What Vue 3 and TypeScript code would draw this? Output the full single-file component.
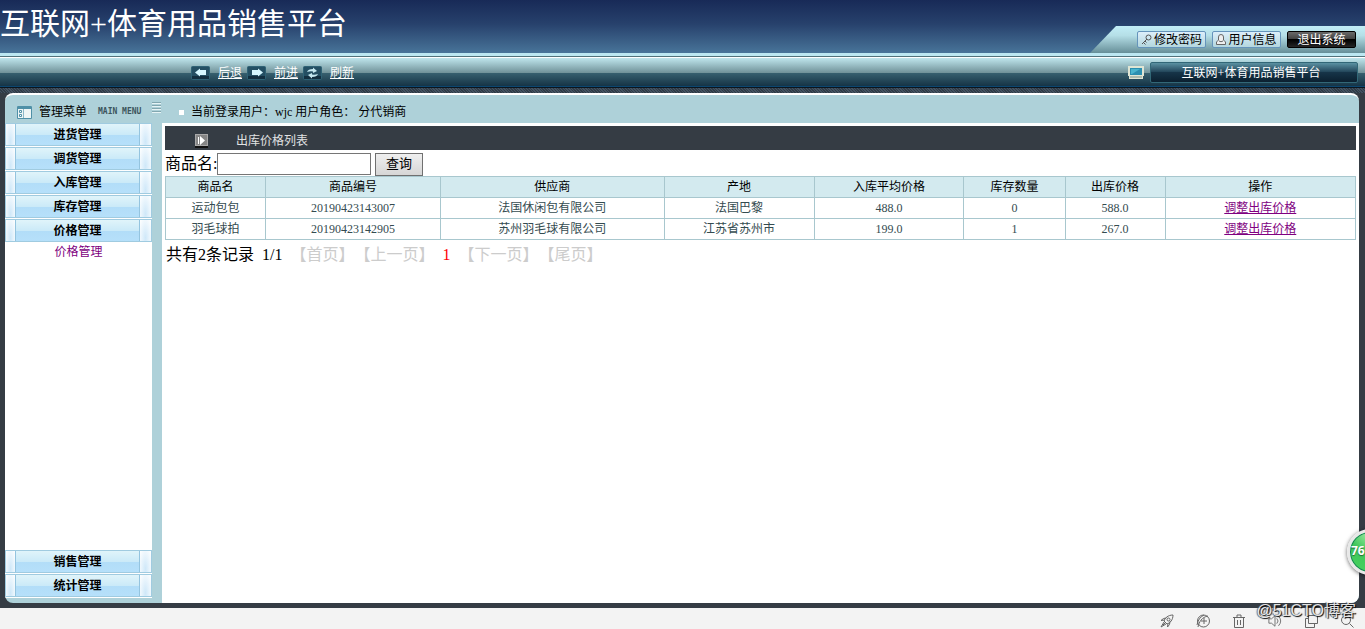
<script setup lang="ts">
import { ref } from 'vue'

interface Product {
  name: string
  code: string
  supplier: string
  origin: string
  average: string
  stock: number
  price: string
}

const keyword = ref('')
const siteName = '互联网+体育用品销售平台'
const upperMenu = ['进货管理', '调货管理', '入库管理', '库存管理', '价格管理']
const lowerMenu = ['销售管理', '统计管理']
const columns = ['商品名', '商品编号', '供应商', '产地', '入库平均价格', '库存数量', '出库价格', '操作']
const products: Product[] = [
  { name: '运动包包', code: '20190423143007', supplier: '法国休闲包有限公司', origin: '法国巴黎', average: '488.0', stock: 0, price: '588.0' },
  { name: '羽毛球拍', code: '20190423142905', supplier: '苏州羽毛球有限公司', origin: '江苏省苏州市', average: '199.0', stock: 1, price: '267.0' },
]
</script>

<template>
  <div class="page">
    <header class="banner">
      <h1>{{ siteName }}</h1>
      <div class="account">
        <button type="button" class="account-btn">
          <svg width="11" height="12" viewBox="0 0 11 12" fill="none" stroke="#555"><circle cx="7.500" cy="3.500" r="2.500" /><path d="M6 5 1 10M2.500 8.500l2 2M4 7l1.500 1.500" /></svg>
          <span>修改密码</span>
        </button>
        <button type="button" class="account-btn">
          <svg width="10" height="12" viewBox="0 0 10 12" fill="#eee" stroke="#666"><path d="M2.500 6V3a2.500 2.500 0 0 1 5 0v3l2 2v2.500h-9V8z" /><path d="M3 7q2 1.500 4 0" /></svg>
          <span>用户信息</span>
        </button>
        <button type="button" class="account-btn dark">退出系统</button>
      </div>
    </header>

    <nav class="toolbar">
      <div class="history">
        <a href="#back">
          <svg width="19" height="14" viewBox="0 0 19 14"><rect x=".5" y=".5" width="18" height="13" rx="1" fill="#244f63" stroke="#2f6275" /><path d="M1 10h17v3H1z" fill="#122f40" /><path d="M4 6.500 9 2.500V4h6v5H9v1.500z" fill="#d5f7ff" /></svg>
          <span>后退</span>
        </a>
        <a href="#forward">
          <svg width="19" height="14" viewBox="0 0 19 14"><rect x=".5" y=".5" width="18" height="13" rx="1" fill="#244f63" stroke="#2f6275" /><path d="M1 10h17v3H1z" fill="#122f40" /><path d="M16 6.500 11 2.500V4H5v5h6v1.500z" fill="#d5f7ff" /></svg>
          <span>前进</span>
        </a>
        <a href="#refresh">
          <svg width="19" height="14" viewBox="0 0 19 14"><rect x=".5" y=".5" width="18" height="13" rx="1" fill="#244f63" stroke="#2f6275" /><path d="M1 10h17v3H1z" fill="#122f40" /><path d="M4 6q1-3 6-3V1.500l4 3.500-4 2V5.500Q7 5 4 6zM15 8q-1 3-6 3v1.500L5 9l4-2v1.500q3 .5 6-.5z" fill="#c5e9f1" /></svg>
          <span>刷新</span>
        </a>
      </div>
      <svg width="16" height="13" viewBox="0 0 16 13"><path d="M0 0h16v10h-1v3H1v-3H0z" fill="#dfe5d4" /><path d="M2 2h12v7H2z" fill="#2b8fb0" /><path d="M3 3h9L4 8H3z" fill="#49b4cd" /><path d="M2 11h12" stroke="#7d9289" /></svg>
      <div class="site">{{ siteName }}</div>
    </nav>

    <main class="frame">
      <div class="panel">
        <div class="status">
          <div class="menu-head">
            <svg width="15" height="13" viewBox="0 0 15 13"><path d="M.5.5h14v12H.5z" fill="#eef5f5" stroke="#4f90a7" /><path d="M1 1h13v2H1z" fill="#4f90a7" /><path d="M2.500 4.500h2v2h-2zm0 4h2v2h-2z" fill="#fff" stroke="#4f90a7" /><path d="M6.500 3v9" stroke="#8cb9c8" /></svg>
            <span>管理菜单</span>
            <small>MAIN MENU</small>
            <svg class="grip" width="9" height="12" viewBox="0 0 9 12"><path d="M0 .5h9M0 3.500h9M0 6.500h9M0 9.500h9" stroke="#82a7b0" /><path d="M0 1.500h9M0 4.500h9M0 7.500h9M0 10.500h9" stroke="#e6f3f5" /></svg>
          </div>
          <i class="dot"></i>
          <span>当前登录用户：wjc 用户角色： 分代销商</span>
        </div>
        <div class="columns">
          <aside class="menu">
            <button v-for="item in upperMenu" :key="item" type="button" class="menu-item"><span>{{ item }}</span></button>
            <a href="#prices" class="submenu">价格管理</a>
            <div class="spacer"></div>
            <button v-for="item in lowerMenu" :key="item" type="button" class="menu-item"><span>{{ item }}</span></button>
          </aside>
          <section class="content">
            <h2>
              <svg width="13" height="14" viewBox="0 0 13 14"><path d="M0 0h13v14H0z" fill="#111" /><path d="M0 0h13v12H0z" fill="#a8a8a8" /><path d="M1 1h11v10H1z" fill="#858585" /><path d="M3 3h1v7H3zM5 2l5 4.500L5 11z" fill="#fff" /></svg>
              <span>出库价格列表</span>
            </h2>
            <form class="search" @submit.prevent>
              <label for="keyword">商品名:</label>
              <input id="keyword" v-model="keyword" type="text" />
              <button type="submit">查询</button>
            </form>
            <table>
              <colgroup><col v-for="(column, i) in columns" :key="column" :class="`col-${i}`" /></colgroup>
              <thead>
                <tr><th v-for="column in columns" :key="column">{{ column }}</th></tr>
              </thead>
              <tbody>
                <tr v-for="p in products" :key="p.code">
                  <td>{{ p.name }}</td>
                  <td>{{ p.code }}</td>
                  <td>{{ p.supplier }}</td>
                  <td>{{ p.origin }}</td>
                  <td>{{ p.average }}</td>
                  <td>{{ p.stock }}</td>
                  <td>{{ p.price }}</td>
                  <td><a href="#adjust">调整出库价格</a></td>
                </tr>
              </tbody>
            </table>
            <div class="pager">
              <span>共有2条记录</span>
              <span>1/1</span>
              <span class="off">【首页】【上一页】</span>
              <span class="current">1</span>
              <span class="off">【下一页】【尾页】</span>
            </div>
          </section>
        </div>
      </div>
    </main>

    <footer class="tray">
      <svg viewBox="0 0 14 14"><path d="M4 7c1-3 4-6 9-6 0 5-3 8-6 9zM4.500 6 1 6.500 3.500 4.500 6 4M8 9.500 7.500 13l2-2.500.5-3M4 8l-3 5 5-3M3 11l3-3" /><circle cx="8.500" cy="5.500" r="1.500" /></svg>
      <svg viewBox="0 0 14 14"><circle cx="7.500" cy="7" r="6" /><path d="M2 13C3 8 6 3 12 2M1 11C2 6 4 3 8 1M5 7h6M8 4v6" /></svg>
      <svg viewBox="0 0 14 14"><path d="M1 3.500h12M5 3V1h4v2M2.500 4v9.500h9V4M5.500 6v5M8.500 6v5" /></svg>
      <svg viewBox="0 0 16 14"><path d="M1 4.500h3L8 1v12L4 9.500H1zM10 4q3 3 0 6M12 1.500q5 5.500 0 11" /></svg>
      <svg viewBox="0 0 14 14"><path d="M4.500 1.500h9v8h-9zM4 4.500H1.500v9h9V10" /></svg>
      <svg viewBox="0 0 14 14"><circle cx="6" cy="6" r="4.500" /><path d="m9.500 9.500 4 4" /></svg>
    </footer>
    <div class="score">76</div>
    <div class="credit">@51CTO博客</div>
  </div>
</template>

<style>
body { margin: 0; }
</style>

<style scoped>
* { box-sizing: border-box; }
.page {
  position: relative;
  display: flex;
  flex-direction: column;
  min-height: 100vh;
  overflow: hidden;
  background: #353c44;
  color: #000;
  font: 12px/20px "Liberation Serif", "Noto Sans CJK SC", serif;
}
svg { display: block; flex: none; }
button { font: inherit; cursor: pointer; }
.banner {
  display: flex;
  align-items: flex-end;
  justify-content: space-between;
  height: 53px;
  background: linear-gradient(#182a57, #27416c 45%, #487499);
}
h1 {
  align-self: flex-start;
  margin: 0;
  color: #fff;
  font-size: 30px;
  font-weight: 400;
  line-height: 48px;
  white-space: nowrap;
}
.account {
  display: flex;
  gap: 6px;
  height: 27px;
  padding: 5px 9px 0 47px;
  background: linear-gradient(#c2eef7, #b5dfe7 35%, #668f98);
  clip-path: polygon(26px 0, 100% 0, 100% 100%, 0 100%);
}
.account-btn {
  display: flex;
  align-items: center;
  justify-content: center;
  gap: 2px;
  width: 69px;
  height: 17px;
  padding: 0;
  border: 1px solid #6594bb;
  border-radius: 2px;
  background: linear-gradient(#dceefa, #b4d7de);
  line-height: 16px;
  white-space: nowrap;
}
.account-btn.dark {
  border-color: #000;
  background: linear-gradient(#696969, #414141 48%, #000 50%, #252525);
  color: #fff;
}
.toolbar {
  display: flex;
  align-items: center;
  height: 35px;
  padding: 4px 7px 0 191px;
  background: linear-gradient(#bce8f2 3px, #52737b 3px 4px, #fff 4px 5px, #bfe6ed 5px, #709198 20px, #37606f 20px, #163446 33px, #0b4670 33px 34px, #0b151e 34px);
}
.history { display: flex; gap: 5px; margin-right: auto; }
.history a { display: flex; align-items: center; gap: 8px; color: #fff; }
.site {
  width: 208px;
  height: 21px;
  margin-left: 6px;
  padding-right: 6px;
  border: 1px solid #326777;
  border-radius: 2px;
  background: linear-gradient(#5b91a2, #25495d 45%, #163448 50%, #0b2030);
  color: #fff;
  line-height: 20px;
  text-align: center;
}
.frame {
  display: flex;
  flex: 1;
  padding: 5px 6px 5px 5px;
  background: repeating-linear-gradient(45deg, #303b46 0 1px, #435261 1px 2px) top / 100% 5px no-repeat;
}
.panel {
  display: flex;
  flex: 1;
  flex-direction: column;
  border-top: 2px solid #fff;
  border-radius: 8px;
  background: #aed1d9;
  overflow: hidden;
}
.status { display: flex; align-items: center; height: 28px; padding-top: 6px; }
.menu-head { display: flex; align-items: center; width: 174px; padding-left: 12px; }
.menu-head span { margin-left: 7px; }
.menu-head small { margin-left: 11px; color: #3c555d; font: 700 8px/12px "DejaVu Sans Mono", monospace; white-space: nowrap; }
.grip { margin-left: 11px; align-self: flex-start; }
.dot { width: 5px; height: 5px; margin-right: 7px; background: #fff; }
.columns { display: flex; flex: 1; }
.menu {
  display: flex;
  flex-direction: column;
  width: 147px;
  margin: 0 10px 5px 0;
  background: #fff;
}
.spacer { flex: 1; }
.menu-item {
  height: 23px;
  margin: 0 0 1px;
  padding: 0 11px 0 9px;
  border: 1px solid #a0cbe0;
  background: radial-gradient(ellipse at 50% 85%, #cfe8f9, #fff) left / 9px 100% no-repeat, radial-gradient(ellipse at 50% 85%, #cfe8f9, #fff) right / 11px 100% no-repeat;
  font-weight: 700;
}
.menu-item span {
  display: block;
  height: 21px;
  border: 1px solid #94c4df;
  border-width: 0 1px;
  background: linear-gradient(#e0f4fa, #cbeaf8 50%, #b2ddf8 52%, #b6e0fa);
  line-height: 22px;
}
.submenu { color: #800080; text-align: center; text-decoration: none; line-height: 18px; }
.content { flex: 1; min-width: 0; padding: 3px; background: #fff; }
h2 {
  display: flex;
  align-items: center;
  gap: 28px;
  height: 24px;
  margin: 0;
  padding: 6px 0 0 30px;
  background: #353c44;
  color: #e1e2e3;
  font-size: 12px;
  font-weight: 400;
}
.search { display: flex; align-items: center; height: 26px; padding-top: 2px; font-size: 16px; }
.search label { width: 52px; white-space: nowrap; }
.search input { width: 154px; height: 22px; margin-right: 4px; padding: 1px; border: 1px solid #767676; }
.search button { width: 48px; height: 23px; padding: 0; border: 1px solid #707070; background: linear-gradient(#efefef, #d6d6d6); font-size: 13px; }
table { width: 100%; border-collapse: collapse; table-layout: fixed; color: #344b50; text-align: center; }
th, td { height: 21px; padding: 1px 0 0; border: 1px solid #a8c7ce; line-height: 19px; }
th { background: #d3eaef; color: #000; font-weight: 400; }
td a { color: #800080; }
.col-0, .col-6 { width: 8.4%; }
.col-1 { width: 14.7%; }
.col-2 { width: 18.8%; }
.col-3, .col-4 { width: 12.6%; }
.col-5 { width: 8.5%; }
.pager { display: flex; gap: 8px; padding: 5px 1px; font-size: 16px; font-kerning: none; text-spacing-trim: space-all; white-space: nowrap; }
.off { color: #ccc; }
.current { color: #f00; }
.tray {
  display: flex;
  align-items: center;
  justify-content: flex-end;
  gap: 22px;
  height: 21px;
  padding: 4px 11px 0 0;
  background: #f3f3f3;
}
.tray svg { width: 14px; height: 14px; fill: none; stroke: #666; }
.score {
  position: absolute;
  right: -28px;
  bottom: 54px;
  width: 46px;
  height: 46px;
  padding-left: 1px;
  border: 3px solid #e8e8e8;
  border-radius: 50%;
  background: radial-gradient(circle at 50% 0, #a7eea9, #40c65b 45%, #48d35f);
  box-shadow: inset 0 0 0 1px #168455, 0 1px 4px #0009;
  color: #fff;
  font: 700 12px/38px "Open Sans", sans-serif;
  text-shadow: 0 1px 1px #246b34;
}
.credit {
  position: absolute;
  right: 9px;
  bottom: 8px;
  color: #fffd;
  font: 16px/20px "Liberation Sans", "Noto Sans CJK SC", sans-serif;
  text-shadow: 1px 1px 1px #000, -1px 0 1px #555;
}
</style>
